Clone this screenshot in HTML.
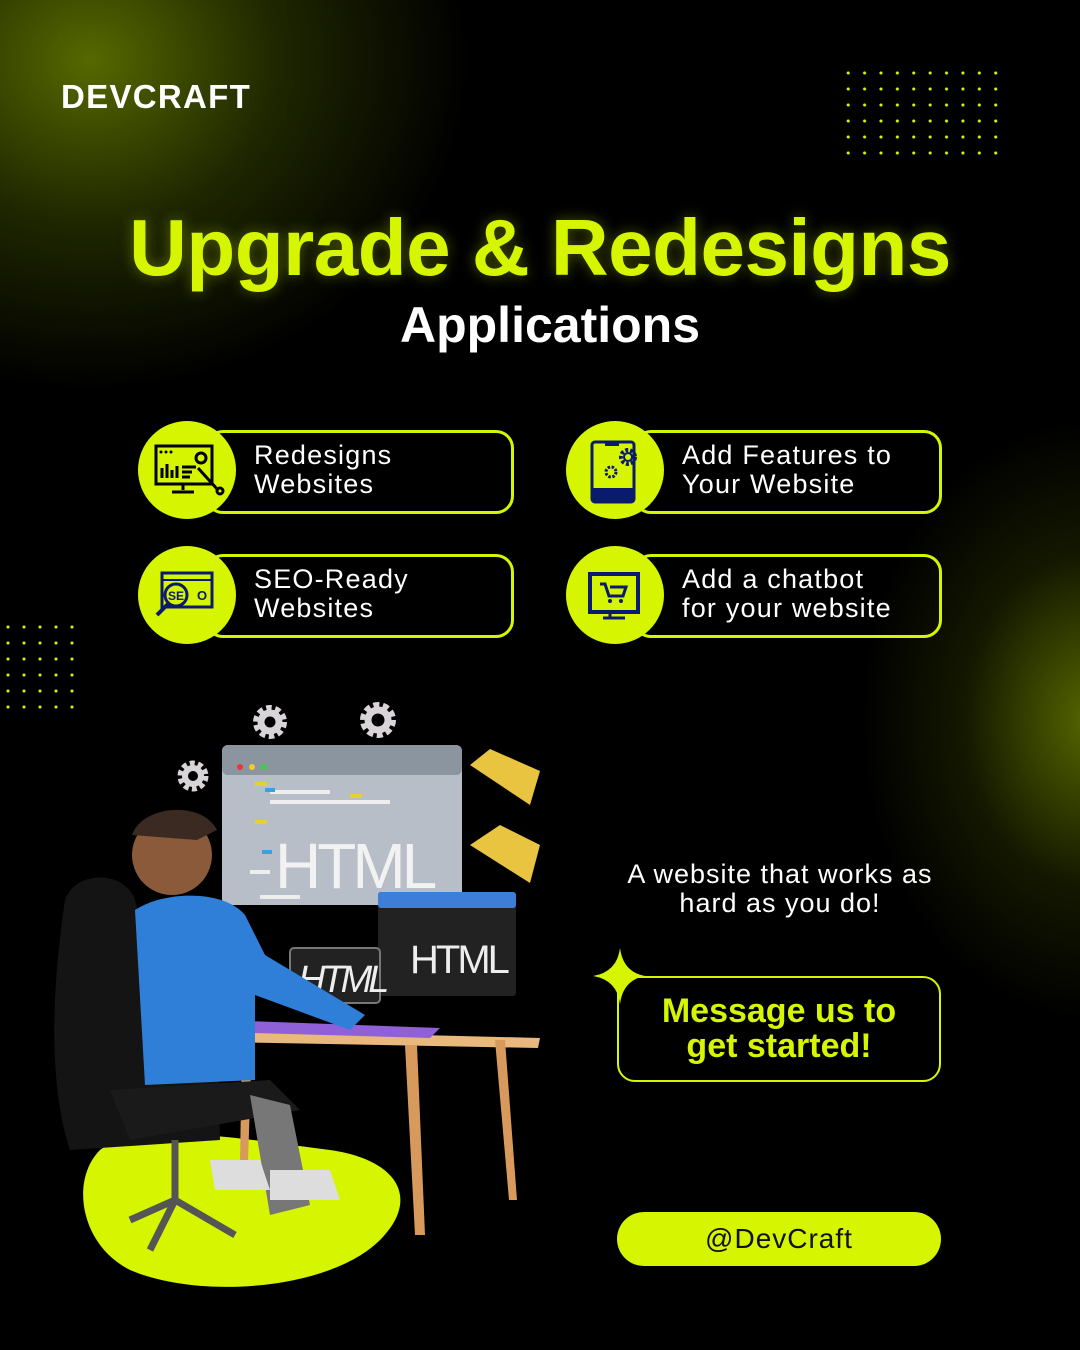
<!DOCTYPE html>
<html><head><meta charset="utf-8"><style>
*{margin:0;padding:0;box-sizing:border-box}
body{width:1080px;height:1350px;overflow:hidden;background:#000;font-family:"Liberation Sans",sans-serif;position:relative}
.bg{position:absolute;inset:0;background:
radial-gradient(ellipse 380px 330px at 90px 60px,rgba(90,110,0,.95),rgba(60,75,0,.5) 50%,rgba(0,0,0,0) 100%),
radial-gradient(ellipse 230px 300px at 1090px 720px,rgba(100,120,0,.85),rgba(50,60,0,.4) 55%,rgba(0,0,0,0) 100%);}
.abs{position:absolute}
.logo{left:61px;top:78px;color:#fff;font-weight:bold;font-size:33px;letter-spacing:1.3px}
.title{left:0;width:1080px;top:202px;text-align:center;color:#d6f500;font-weight:bold;font-size:80px;letter-spacing:-.5px;text-shadow:0 0 14px rgba(214,245,0,.35)}
.sub{left:0;width:1100px;top:296px;text-align:center;color:#fff;font-weight:bold;font-size:50px}
.box{border:3px solid #d6f500;border-radius:18px;height:84px}
.circ{width:98px;height:98px;border-radius:50%;background:#d6f500}
.ct{color:#fff;font-size:27px;line-height:29px;letter-spacing:1.2px}
.dots{background-image:radial-gradient(circle,#d6f500 1.3px,transparent 1.8px)}
</style></head><body>
<div class="bg"></div>
<div class="abs logo">DEVCRAFT</div>
<div class="abs dots" style="left:840px;top:65px;width:164px;height:96px;background-size:16.4px 16px"></div>
<div class="abs dots" style="left:0;top:619px;width:80px;height:96px;background-size:16px 16px"></div>
<div class="abs title">Upgrade &amp; Redesigns</div>
<div class="abs sub">Applications</div>

<div class="abs box" style="left:205px;top:430px;width:309px"></div>
<div class="abs box" style="left:633px;top:430px;width:309px"></div>
<div class="abs box" style="left:205px;top:554px;width:309px"></div>
<div class="abs box" style="left:633px;top:554px;width:309px"></div>
<div class="abs circ" style="left:138px;top:421px"></div>
<div class="abs circ" style="left:566px;top:421px"></div>
<div class="abs circ" style="left:138px;top:546px"></div>
<div class="abs circ" style="left:566px;top:546px"></div>
<div class="abs ct" style="left:254px;top:441px">Redesigns<br>Websites</div>
<div class="abs ct" style="left:682px;top:441px">Add Features to<br>Your Website</div>
<div class="abs ct" style="left:254px;top:565px">SEO-Ready<br>Websites</div>
<div class="abs ct" style="left:682px;top:565px">Add a chatbot<br>for your website</div>

<svg class="abs" style="left:0;top:0" width="1080" height="1350">
<g fill="none" stroke="#000" stroke-width="3">
<rect x="156" y="446" width="56" height="38" fill="none"/>
<path d="M183 484v6M172 492h22"/>
<path d="M162 478v-10M167 478v-14M172 478v-8M177 478v-12"/>
<path d="M182 467h14M182 472h10M182 477h8"/>
<path d="M198 468l20 22"/><circle cx="201" cy="458" r="5"/><circle cx="220" cy="491" r="3"/>
</g>
<g fill="#000"><circle cx="161" cy="452" r="1.5"/><circle cx="166" cy="452" r="1.5"/><circle cx="171" cy="452" r="1.5"/></g>
<rect x="592" y="442" width="42" height="60" rx="3" fill="none" stroke="#0a1a6e" stroke-width="3"/>
<rect x="592" y="488" width="42" height="14" fill="#0a1a6e"/>
<rect x="605" y="442" width="14" height="4" fill="#0a1a6e"/>
<circle cx="628" cy="457" r="7" fill="none" stroke="#0a1a6e" stroke-width="4" stroke-dasharray="3 2"/>
<circle cx="628" cy="457" r="4" fill="none" stroke="#0a1a6e" stroke-width="2"/>
<circle cx="611" cy="472" r="5" fill="none" stroke="#0a1a6e" stroke-width="3" stroke-dasharray="2.5 1.5"/>
<rect x="162" y="573" width="50" height="34" fill="none" stroke="#0a1a6e" stroke-width="3"/>
<path d="M162 580h50" stroke="#0a1a6e" stroke-width="2"/>
<circle cx="176" cy="595" r="11" fill="#d6f500" stroke="#0a1a6e" stroke-width="3"/>
<path d="M169 603l-12 12" stroke="#0a1a6e" stroke-width="4"/>
<text x="176" y="600" font-size="12" font-weight="bold" text-anchor="middle" fill="#0a1a6e" font-family="Liberation Sans">SE</text>
<text x="202" y="600" font-size="13" font-weight="bold" text-anchor="middle" fill="#0a1a6e" font-family="Liberation Sans">O</text>
<rect x="590" y="574" width="48" height="38" fill="none" stroke="#0a1a6e" stroke-width="4"/>
<path d="M610 612v5M603 618h22" stroke="#0a1a6e" stroke-width="3"/>
<path d="M600 584h5l4 12h14l3-9h-16" fill="none" stroke="#0a1a6e" stroke-width="3"/>
<circle cx="610" cy="601" r="2" fill="#0a1a6e"/><circle cx="621" cy="601" r="2" fill="#0a1a6e"/>

<path d="M100 1150 C140 1120 250 1140 330 1150 C400 1160 420 1200 380 1240 C330 1290 200 1300 130 1270 C80 1245 70 1180 100 1150Z" fill="#d6f500"/>
<g fill="none" stroke="#d8d4d8">
<circle cx="270" cy="722" r="13" stroke-width="8" stroke-dasharray="5 3.2"/><circle cx="270" cy="722" r="9" stroke-width="7"/>
<circle cx="378" cy="720" r="14" stroke-width="8" stroke-dasharray="5.5 3.3"/><circle cx="378" cy="720" r="10" stroke-width="7"/>
<circle cx="193" cy="776" r="12" stroke-width="7" stroke-dasharray="4.6 3"/><circle cx="193" cy="776" r="8" stroke-width="6"/>
</g>
<rect x="222" y="745" width="240" height="160" rx="6" fill="#b8bec8"/>
<rect x="222" y="745" width="240" height="30" rx="6" fill="#8a95a0"/>
<circle cx="240" cy="767" r="3" fill="#e33"/><circle cx="252" cy="767" r="3" fill="#ec3"/><circle cx="264" cy="767" r="3" fill="#4c4"/>
<g fill="#eee"><rect x="270" y="790" width="60" height="4"/><rect x="270" y="800" width="120" height="4"/><rect x="260" y="895" width="40" height="4"/><rect x="250" y="870" width="20" height="4"/></g>
<g fill="#e8d030"><rect x="255" y="782" width="12" height="4"/><rect x="350" y="794" width="12" height="4"/><rect x="255" y="820" width="12" height="4"/></g>
<g fill="#3aa0e0"><rect x="265" y="788" width="10" height="4"/><rect x="262" y="850" width="10" height="4"/></g>
<text x="275" y="888" font-size="64" fill="#f2f2f2" font-family="Liberation Sans" letter-spacing="-4">HTML</text>
<path d="M470 765l20-16 50 22-10 34z" fill="#e8c440"/>
<path d="M470 845l30-20 40 20-10 38z" fill="#e8c440"/>
<rect x="378" y="892" width="138" height="104" rx="3" fill="#222"/>
<rect x="378" y="892" width="138" height="16" rx="3" fill="#3d7fd8"/>
<text x="410" y="973" font-size="40" fill="#eee" font-family="Liberation Sans" letter-spacing="-3">HTML</text>
<rect x="290" y="948" width="90" height="55" rx="4" fill="#222" stroke="#777" stroke-width="2"/>
<text x="298" y="992" font-size="38" font-style="italic" fill="#eee" font-family="Liberation Sans" letter-spacing="-4">HTML</text>
<path d="M225 1030l315 8-2 10-315-6z" fill="#e8b87c"/>
<path d="M220 1020l220 8-10 10-210-6z" fill="#9060d8"/>
<path d="M405 1045h12l8 190h-10z M495 1040h10l12 160h-8z M242 1042h10l-4 120h-8z" fill="#d89a5c"/>
<path d="M65 900c10-30 60-30 70 0l10 40 70 20 5 180-150 10c-20-60-20-150-5-250z" fill="#141414"/>
<path d="M135 910c30-20 90-20 110 5l20 40 100 60-15 15-95-35 0 85-110 5z" fill="#2f7fd8"/>
<circle cx="172" cy="855" r="40" fill="#8a5a3a"/>
<path d="M132 835c10-30 70-35 85-5l-20 10z" fill="#3a2a22"/>
<path d="M110 1090l160-10 30 30-170 30z" fill="#1a1a1a"/>
<path d="M250 1095l40 10 20 100-40 10z" fill="#777"/>
<path d="M210 1160h50l10 30-55 0z M270 1170h60l10 30-70 0z" fill="#ddd"/>
<path d="M175 1140v60M130 1220l45-20 60 35M175 1200l-25 50" stroke="#555" stroke-width="7" fill="none"/>
<path d="M620 948 Q623 972 645 976 Q623 980 620 1004 Q617 980 593 976 Q617 972 620 948Z" fill="#d6f500"/>
</svg>

<div class="abs" style="left:580px;top:860px;width:400px;text-align:center;color:#fff;font-size:27px;line-height:29px;letter-spacing:1px">A website that works as<br>hard as you do!</div>
<div class="abs" style="left:617px;top:976px;width:324px;height:106px;border:2px solid #d6f500;border-radius:18px;color:#d6f500;font-weight:bold;font-size:34px;line-height:35px;text-align:center;padding-top:16px">Message us to<br>get started!</div>
<div class="abs" style="left:617px;top:1212px;width:324px;height:54px;background:#d6f500;border-radius:27px;color:#111;font-size:28px;line-height:54px;text-align:center;letter-spacing:1px">@DevCraft</div>
</body></html>
